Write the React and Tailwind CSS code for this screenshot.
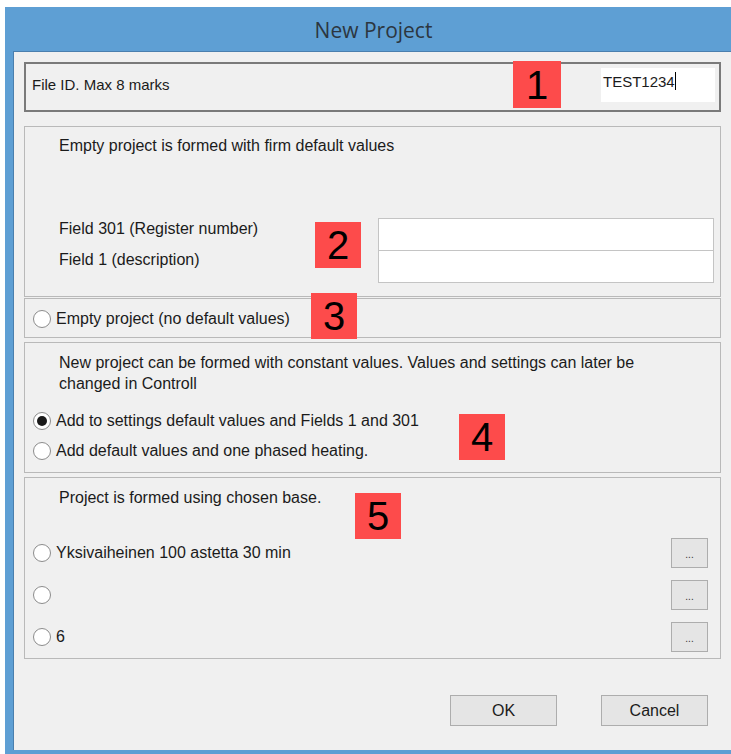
import React from "react";

const Badge = ({ n, className }) => (
  <div
    className={`absolute flex items-center justify-center bg-[#fd4b4b] text-black text-[40px] leading-none w-[46px] h-[46px] ${className}`}
    style={{ fontFamily: '"Liberation Sans", Arial, sans-serif' }}
  >
    {n}
  </div>
);

const Radio = ({ checked }) => (
  <span className="flex items-center justify-center w-[18px] h-[18px] rounded-full border border-[#8c8c8c] bg-white shrink-0">
    {checked && <span className="w-[10px] h-[10px] rounded-full bg-[#1a1a1a]" />}
  </span>
);

const RadioRow = ({ checked, label }) => (
  <div className="flex items-center gap-[5px] h-[22px]">
    <Radio checked={checked} />
    <span>{label}</span>
  </div>
);

const DotsButton = () => (
  <button className="w-[37px] h-[30px] border border-[#adadad] bg-[#e5e5e5] text-[10px] text-[#333] leading-none pt-[4px]">
    ...
  </button>
);

export default function App() {
  return (
    <div
      className="w-[731px] h-[754px] bg-white pl-[5px] pt-[7px] overflow-hidden text-[16px] text-[#1b1b1b]"
      style={{ fontFamily: '"Liberation Sans", Arial, sans-serif' }}
    >
      <div className="flex flex-col h-full bg-[#5e9fd4]">
        {/* title bar */}
        <div
          className="h-[44px] flex items-center justify-center text-[21px] text-[#2c3640] pl-[11px] pt-[3px]"
          style={{ fontFamily: '"Open Sans", "Liberation Sans", sans-serif' }}
        >
          New Project
        </div>

        {/* client area */}
        <div className="flex-1 ml-[8px] mb-[4px] bg-[#f0f0f0] border-l border-t border-[#4a7fae] pl-[10px] pr-[10px] pt-[10px] flex flex-col">
          {/* 1: file id */}
          <div className="relative h-[50px] border-2 border-[#7a7a7a] flex items-center pl-[6px] pb-[4px]">
            <span className="text-[15px]">File ID. Max 8 marks</span>
            <Badge n="1" className="left-[487px] top-[-3px] h-[47px] w-[48px]" />
            <div className="absolute left-[575px] top-[4px] w-[114px] h-[34px] bg-white text-[15px] pl-[2px] pt-[3px] flex items-start">
              TEST1234<span className="w-px h-[18px] bg-black mt-[1px]" />
            </div>
          </div>

          {/* 2: firm default values */}
          <div className="relative mt-[14px] h-[171px] border border-[#b9b9b9] pl-[34px] pt-[7px]">
            <div>Empty project is formed with firm default values</div>
            <div className="absolute left-[34px] top-[92px] flex flex-col gap-[11px] leading-[20px]">
              <span>Field 301 (Register number)</span>
              <span>Field 1 (description)</span>
            </div>
            <div className="absolute left-[353px] top-[91px] w-[336px] flex flex-col">
              <div className="h-[33px] bg-white border border-[#c4c4c4]" />
              <div className="h-[33px] bg-white border border-[#c4c4c4] -mt-px" />
            </div>
            <Badge n="2" className="left-[290px] top-[95px] w-[45px] h-[45px]" />
          </div>

          {/* 3: empty project */}
          <div className="relative mt-px h-[40px] border border-[#b9b9b9] flex items-center pl-[8px] pt-[1px]">
            <RadioRow label="Empty project (no default values)" />
            <Badge n="3" className="left-[286px] top-[-6px] w-[45px] h-[45px]" />
          </div>

          {/* 4: constant values */}
          <div className="relative mt-[4px] h-[131px] border border-[#b9b9b9] pl-[8px] pt-[9px]">
            <div className="pl-[26px] leading-[21px]">
              New project can be formed with constant values. Values and settings can later be
              <br />
              changed in Controll
            </div>
            <div className="mt-[16px] flex flex-col gap-[8px]">
              <RadioRow checked label="Add to settings default values and Fields 1 and 301" />
              <RadioRow label="Add default values and one phased heating." />
            </div>
            <Badge n="4" className="left-[434px] top-[71px] w-[46px] h-[46px]" />
          </div>

          {/* 5: chosen base */}
          <div className="relative mt-[4px] h-[182px] border border-[#b9b9b9] pl-[8px] pr-[12px] pt-[8px]">
            <div className="pl-[26px]">Project is formed using chosen base.</div>
            <div className="mt-[28px] flex flex-col gap-[12px]">
              <div className="flex items-center justify-between">
                <RadioRow label="Yksivaiheinen 100 astetta 30 min" />
                <DotsButton />
              </div>
              <div className="flex items-center justify-between">
                <RadioRow label="" />
                <DotsButton />
              </div>
              <div className="flex items-center justify-between">
                <RadioRow label="6" />
                <DotsButton />
              </div>
            </div>
            <Badge n="5" className="left-[330px] top-[15px] w-[45px] h-[46px]" />
          </div>

          {/* dialog buttons */}
          <div className="mt-[36px] flex justify-end gap-[44px] pr-[13px]">
            <button className="w-[107px] h-[31px] border border-[#adadad] bg-[#e5e5e5]">OK</button>
            <button className="w-[107px] h-[31px] border border-[#adadad] bg-[#e5e5e5]">Cancel</button>
          </div>
        </div>
      </div>
    </div>
  );
}
